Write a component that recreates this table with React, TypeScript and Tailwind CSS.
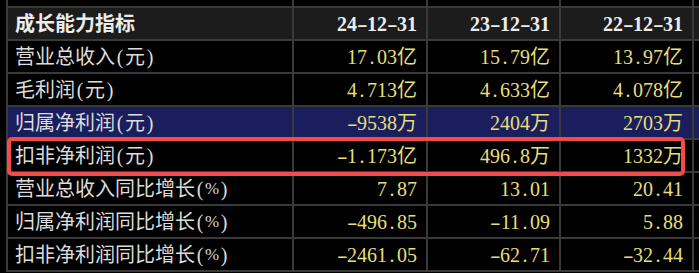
import React from 'react'

const dates = ['24-12-31', '23-12-31', '22-12-31']

const rows = [
  { label: '营业总收入(元)', values: ['17.03亿', '15.79亿', '13.97亿'] },
  { label: '毛利润(元)', values: ['4.713亿', '4.633亿', '4.078亿'] },
  { label: '归属净利润(元)', values: ['-9538万', '2404万', '2703万'], highlight: true },
  { label: '扣非净利润(元)', values: ['-1.173亿', '496.8万', '1332万'] },
  { label: '营业总收入同比增长(%)', values: ['7.87', '13.01', '20.41'] },
  { label: '归属净利润同比增长(%)', values: ['-496.85', '-11.09', '5.88'] },
  { label: '扣非净利润同比增长(%)', values: ['-2461.05', '-62.71', '-32.44'] },
]

// half-width glyphs like the terminal font: ascii punctuation takes 0.5em
const Glyphs = ({ text }: { text: string }) => (
  <>
    {[...text].map((c, i) => {
      if (c === '%')
        return (
          <span key={i} className="inline-block w-[14px] text-center text-[17px]">
            %
          </span>
        )
      if (c === '-')
        return (
          <span key={i} className="inline-block w-[10px] text-center">
            <span className="inline-block scale-x-[1.6]">-</span>
          </span>
        )
      if (c === '.' || c === '(' || c === ')')
        return (
          <span key={i} className="inline-block w-[10px] text-center">
            {c}
          </span>
        )
      return <React.Fragment key={i}>{c}</React.Fragment>
    })}
  </>
)

const cell = 'flex items-center border-r-2 border-b-2 border-[#3a3a3a] h-[33px]'

const App: React.FC = () => {
  return (
    <div
      className="relative h-[273px] w-[699px] overflow-hidden bg-black text-[20px] leading-none"
      style={{ fontFamily: '"Liberation Serif", "Noto Sans CJK SC", serif' }}
    >
      <div className="ml-[6px] grid grid-cols-[286px_134px_133px_133px_1fr] border-l-2 border-[#3a3a3a]">
        {/* tail of the previous row */}
        <div className="h-[8px] border-r-2 border-b-2 border-[#3a3a3a]" />
        <div className="h-[8px] border-r-2 border-b-2 border-[#3a3a3a]" />
        <div className="h-[8px] border-r-2 border-b-2 border-[#3a3a3a]" />
        <div className="h-[8px] border-r-2 border-b-2 border-[#3a3a3a]" />
        <div className="h-[8px] border-b-2 border-[#3a3a3a]" />

        {/* header */}
        <div className={`${cell} bg-[#1c1c1c] pl-[7px] font-bold text-[#ececec]`}>成长能力指标</div>
        {dates.map((d) => (
          <div key={d} className={`${cell} justify-end bg-[#1c1c1c] pr-[9px] font-bold text-[#ececec]`}>
            <Glyphs text={d} />
          </div>
        ))}
        <div className="h-[33px] border-b-2 border-[#3a3a3a] bg-[#1c1c1c]" />

        {rows.map((row) => {
          const bg = row.highlight ? 'bg-[#1b1e5c]' : 'bg-black'
          return (
            <React.Fragment key={row.label}>
              <div className={`${cell} ${bg} pl-[7px] text-[#dcdcdc]`}>
                <Glyphs text={row.label} />
              </div>
              {row.values.map((v, i) => (
                <div key={i} className={`${cell} ${bg} justify-end pr-[9px] text-[#e6df7a]`}>
                  <Glyphs text={v} />
                </div>
              ))}
              <div className={`h-[33px] border-b-2 border-[#3a3a3a] ${bg}`} />
            </React.Fragment>
          )
        })}
      </div>

      {/* red highlight box */}
      <div className="pointer-events-none absolute left-[7px] top-[137px] h-[39px] w-[678px] rounded-[5px] border-4 border-[#f24b4b]" />
    </div>
  )
}

export default App
